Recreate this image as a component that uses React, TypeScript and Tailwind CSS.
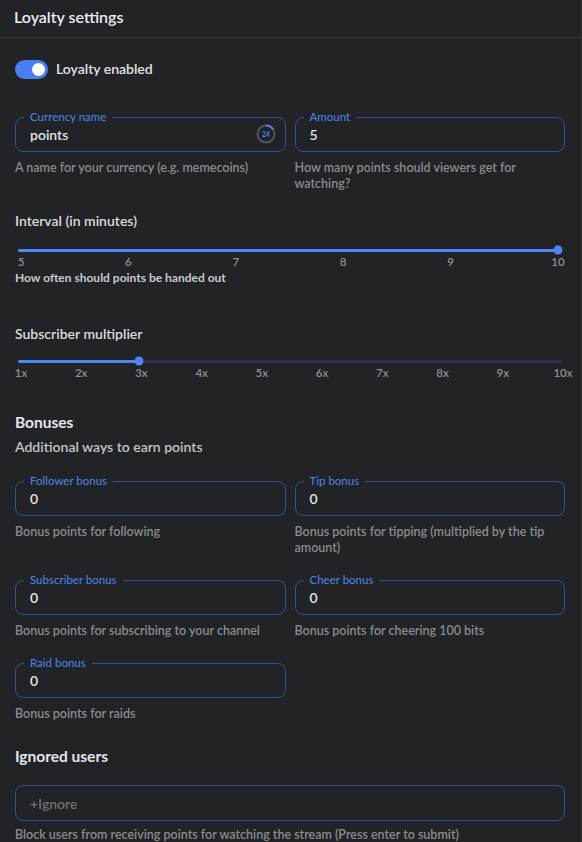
import React from 'react';

const font = { fontFamily: 'Lato, "Noto Sans", Arial, sans-serif' };

type FieldProps = { label: string; value: string; counter?: boolean };

const OutlinedField: React.FC<FieldProps> = ({ label, value, counter }) => (
  <fieldset className="border border-[#35508f] rounded-[8px] px-[8px] pb-[7px] min-w-0">
    <legend className="px-[6px] text-[11.5px] leading-[12px] text-[#5083ea]">{label}</legend>
    <div className="flex items-center h-[20px] mt-[1px] pl-[6px] pr-[1px]">
      <span className="flex-1 text-[14px] text-[#e4e4e6] font-semibold">{value}</span>
      {counter && (
        <svg width="20" height="20" viewBox="0 0 20 20">
          <circle cx="10" cy="10" r="8.5" fill="none" stroke="#55565a" strokeWidth="1.8" />
          <path d="M10 1.5 A8.5 8.5 0 0 1 17.2 5.5" fill="none" stroke="#4f80f0" strokeWidth="2" />
          <text x="10" y="12.6" textAnchor="middle" fontSize="7" fontWeight="700" fill="#4f80f0" style={font}>
            24
          </text>
        </svg>
      )}
    </div>
  </fieldset>
);

const Helper: React.FC<{ children: React.ReactNode }> = ({ children }) => (
  <p className="mt-[8px] text-[12.5px] leading-[16px] font-semibold text-[#8a8b8f]">{children}</p>
);

type SliderProps = { ticks: string[]; value: number; trackW: number; tickW: number };

const Slider: React.FC<SliderProps> = ({ ticks, value, trackW, tickW }) => {
  const pct = (value / (ticks.length - 1)) * 100;
  return (
    <div>
      <div className="ml-[3px] h-[10px] flex items-center" style={{ width: trackW }}>
        <div className="relative w-full h-[3px] rounded-full bg-[#2b3249]">
          <div className="h-full rounded-full bg-[#5084f4]" style={{ width: `${pct}%` }} />
          <div
            className="absolute top-1/2 w-[9px] h-[9px] -translate-x-1/2 -translate-y-1/2 rounded-full bg-[#5084f4]"
            style={{ left: `${pct}%` }}
          />
        </div>
      </div>
      <div className="relative ml-[6px] h-[14px]" style={{ width: tickW }}>
        {ticks.map((t, i) => (
          <span
            key={t}
            className="absolute top-0 -translate-x-1/2 text-[11.5px] leading-[14px] font-semibold text-[#8e8f93]"
            style={{ left: `${(i / (ticks.length - 1)) * 100}%` }}
          >
            {t}
          </span>
        ))}
      </div>
    </div>
  );
};

export default function App() {
  return (
    <div className="w-[582px] min-h-[842px] bg-[#222327] border-r border-[#2f3034]" style={font}>
      <div className="h-[38px] border-b border-[#393a3e] px-[14px] pt-[7px]">
        <h2 className="text-[16px] leading-[20px] font-semibold text-[#ececee]">Loyalty settings</h2>
      </div>

      <div className="pl-[15px] pr-[16px] pb-[20px]">
        <div className="mt-[21px] flex items-center gap-[8px]">
          <div className="w-[33px] h-[19px] rounded-full bg-[#4b7ef2] flex items-center justify-end pr-[3px]">
            <div className="w-[13px] h-[13px] rounded-full bg-white" />
          </div>
          <span className="text-[14px] leading-[20px] font-semibold text-[#e2e2e4]">Loyalty enabled</span>
        </div>

        <div className="mt-[32px] grid grid-cols-2 gap-x-[9px]">
          <div>
            <OutlinedField label="Currency name" value="points" counter />
            <Helper>A name for your currency (e.g. memecoins)</Helper>
          </div>
          <div>
            <OutlinedField label="Amount" value="5" />
            <Helper>How many points should viewers get for watching?</Helper>
          </div>
        </div>

        <h3 className="mt-[19px] text-[14px] leading-[20px] font-semibold text-[#dcdcde]">Interval (in minutes)</h3>
        <div className="mt-[14px]">
          <Slider ticks={['5', '6', '7', '8', '9', '10']} value={5} trackW={540} tickW={537} />
        </div>
        <p className="mt-[2px] text-[12px] leading-[14px] font-bold text-[#c9cacd]">How often should points be handed out</p>

        <h3 className="mt-[39px] text-[14px] leading-[20px] font-semibold text-[#dcdcde]">Subscriber multiplier</h3>
        <div className="mt-[12px]">
          <Slider
            ticks={['1x', '2x', '3x', '4x', '5x', '6x', '7x', '8x', '9x', '10x']}
            value={2}
            trackW={544}
            tickW={542}
          />
        </div>

        <h3 className="mt-[32px] text-[15.5px] leading-[20px] font-bold text-[#e6e6e8]">Bonuses</h3>
        <p className="mt-[5px] text-[14px] leading-[20px] font-semibold text-[#c4c5c8]">Additional ways to earn points</p>

        <div className="mt-[18px] grid grid-cols-2 gap-x-[9px] gap-y-[18px]">
          <div>
            <OutlinedField label="Follower bonus" value="0" />
            <Helper>Bonus points for following</Helper>
          </div>
          <div>
            <OutlinedField label="Tip bonus" value="0" />
            <Helper>Bonus points for tipping (multiplied by the tip amount)</Helper>
          </div>
          <div>
            <OutlinedField label="Subscriber bonus" value="0" />
            <Helper>Bonus points for subscribing to your channel</Helper>
          </div>
          <div>
            <OutlinedField label="Cheer bonus" value="0" />
            <Helper>Bonus points for cheering 100 bits</Helper>
          </div>
          <div>
            <OutlinedField label="Raid bonus" value="0" />
            <Helper>Bonus points for raids</Helper>
          </div>
        </div>

        <h3 className="mt-[24px] text-[15.5px] leading-[20px] font-bold text-[#e6e6e8]">Ignored users</h3>
        <div className="mt-[19px] h-[36px] border border-[#35508f] rounded-[8px] flex items-center px-[14px]">
          <span className="text-[14px] text-[#6f7074] font-semibold">+Ignore</span>
        </div>
        <p className="mt-[6px] text-[12.5px] leading-[16px] font-semibold text-[#8a8b8f]">
          Block users from receiving points for watching the stream (Press enter to submit)
        </p>
      </div>
    </div>
  );
}
